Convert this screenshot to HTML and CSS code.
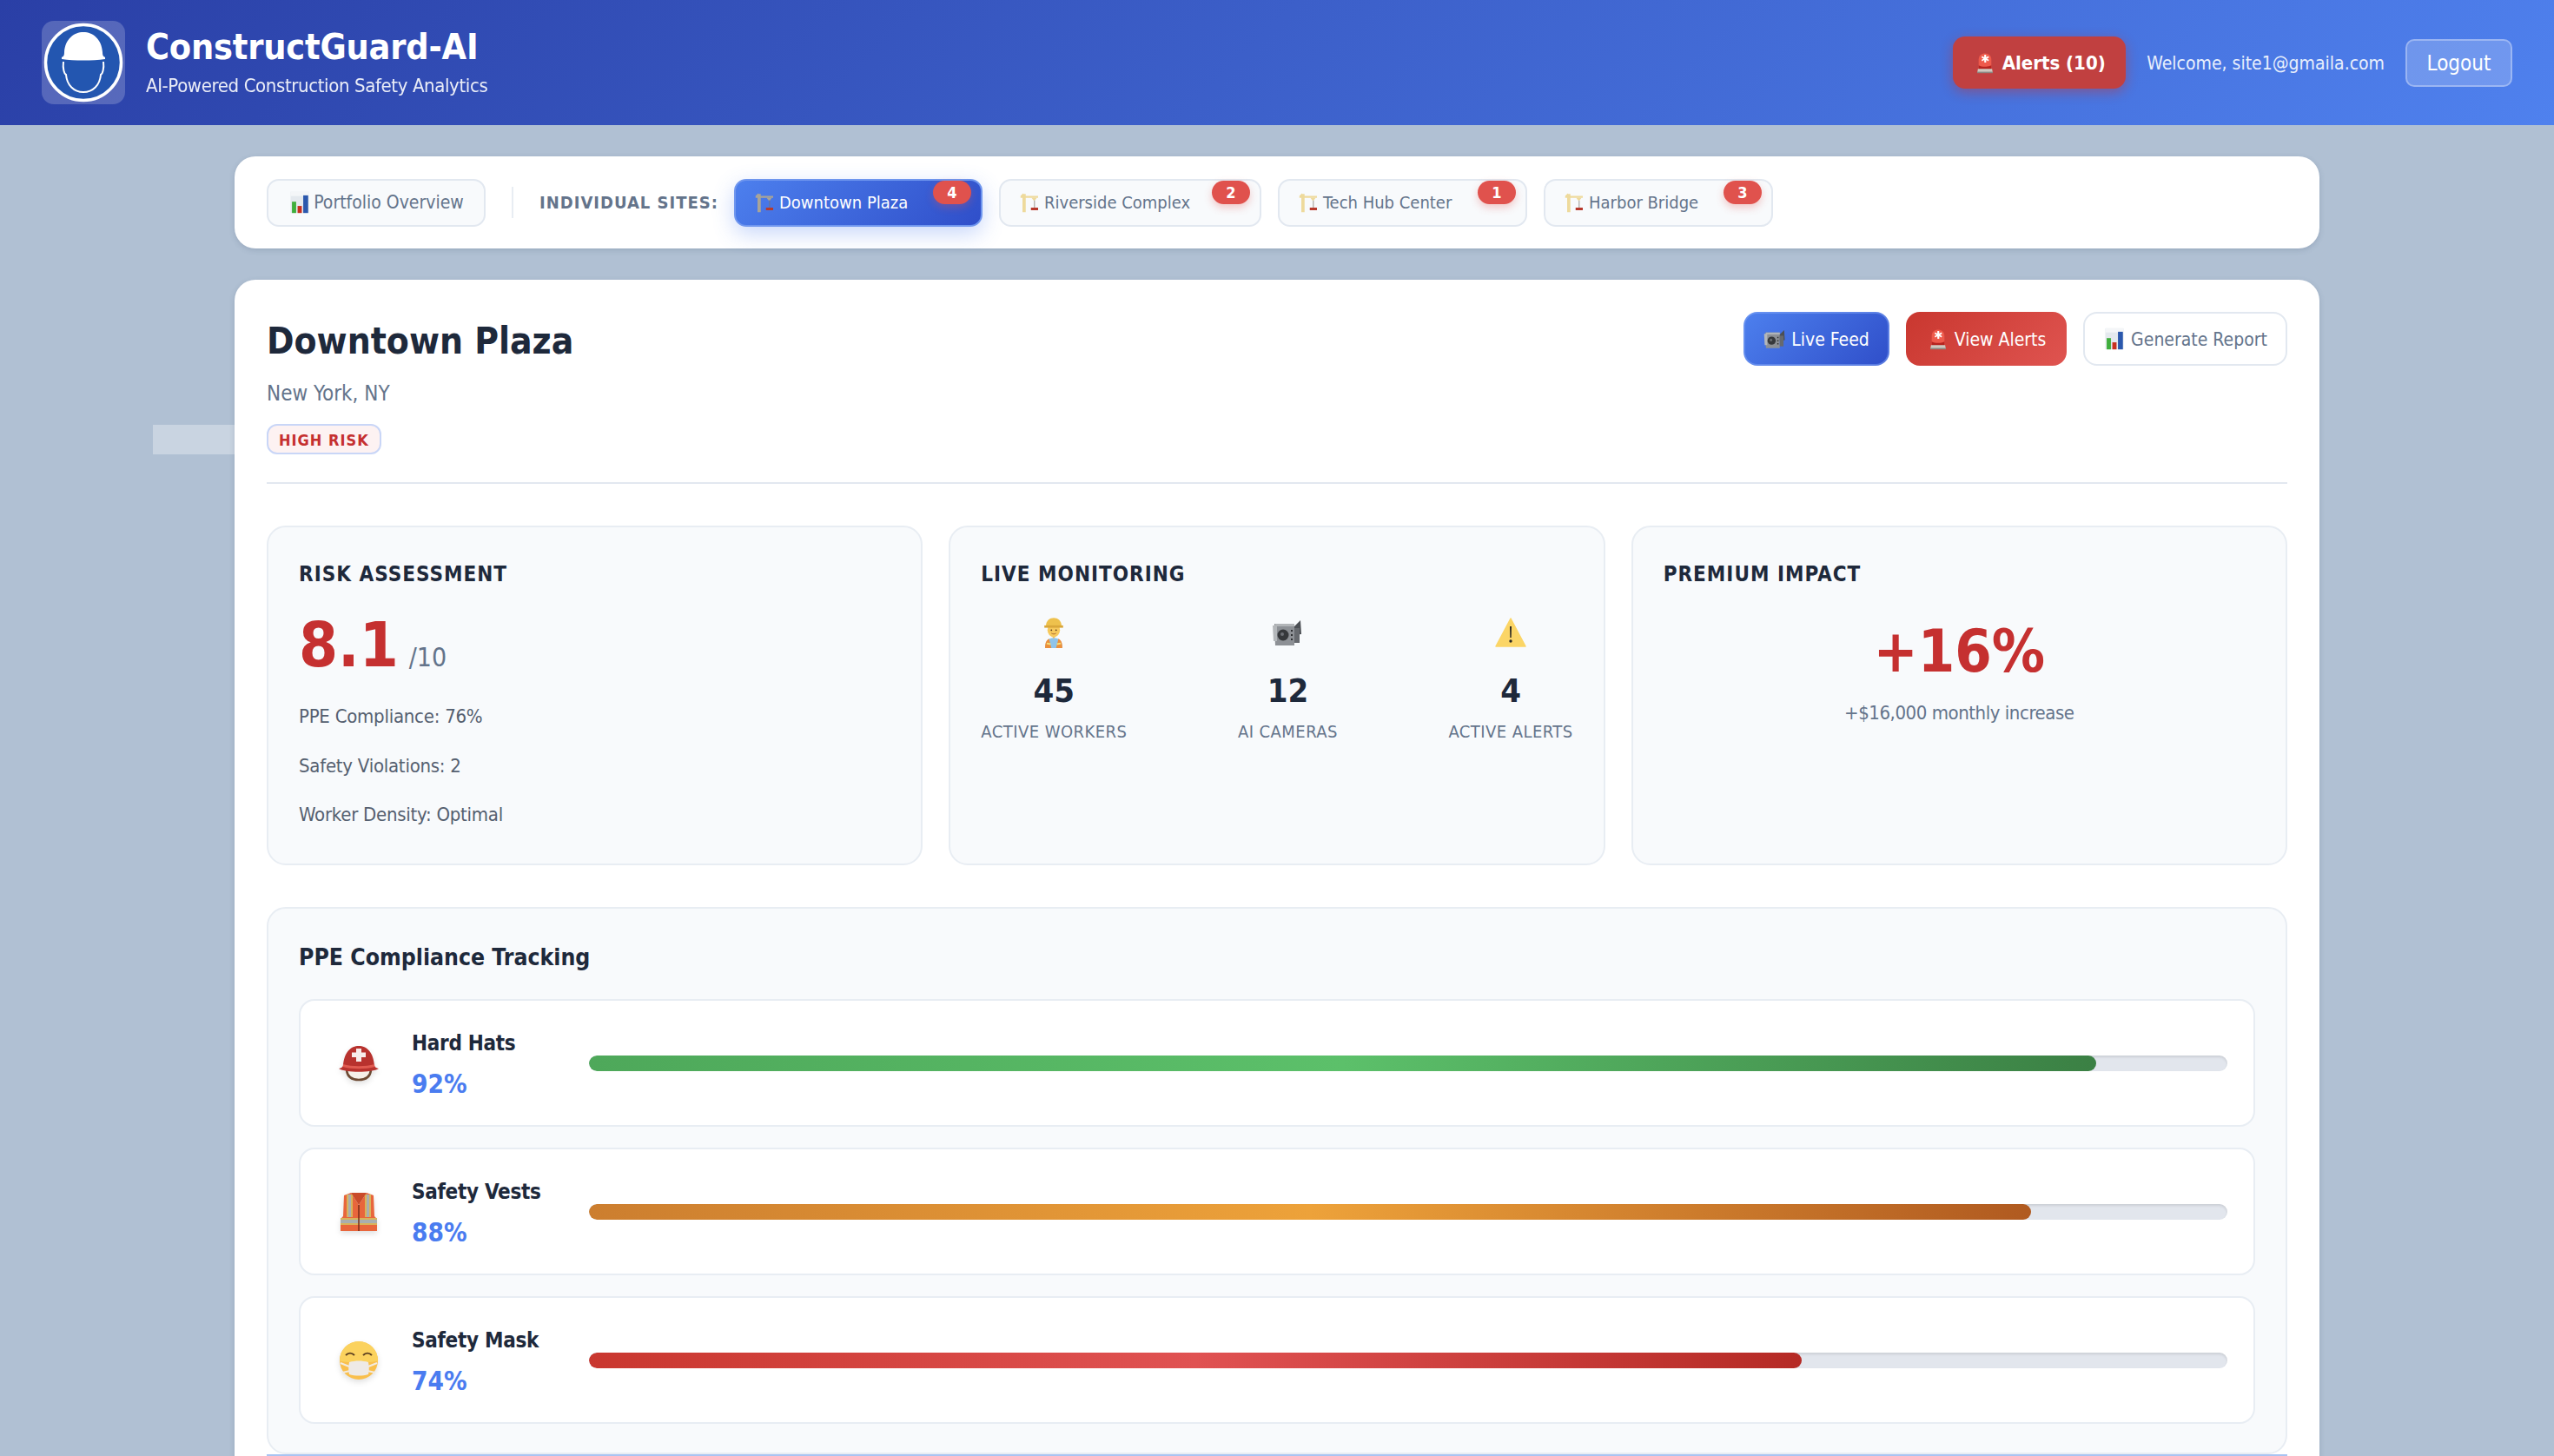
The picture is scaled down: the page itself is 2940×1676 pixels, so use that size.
FILE: index.html
```html
<!DOCTYPE html>
<html lang="en">

<head>
    <meta charset="UTF-8">
    <meta name="viewport" content="width=device-width, initial-scale=1.0">
    <title>ConstructGuard-AI</title>
    <link rel="stylesheet" href="styles.css">
</head>

<body>
    <!-- shared icons -->
    <svg class="defs" width="0" height="0">
        <symbol id="i-chart" viewBox="0 0 32 32">
            <path d="M3 1h26v30H3z" fill="#e4e9ee" />
            <path d="M3 1h26v6H3z" fill="#f4f6f8" />
            <path d="M5 15h6v16H5z" fill="#3fae3c" />
            <path d="M13 21h6v10h-6z" fill="#c8301f" />
            <path d="M21 6h7v25h-7z" fill="#2b58ad" />
        </symbol>
        <symbol id="i-crane" viewBox="0 0 32 32">
            <g fill="currentColor">
                <path d="M4 3h5v28H4z" />
                <path d="M1 6l4-4 1 4h22v3H1z" />
                <path d="M18 9h8l-3 4h-2z" />
            </g>
            <path d="M22 13h1v11h-1z" fill="#7c7468" />
            <path d="M17 24h11v4H17z" fill="#b8392c" />
        </symbol>
        <symbol id="i-siren" viewBox="0 0 32 32">
            <path d="M7 26V12C7 0 25 0 25 12v14z" fill="#ee5a4c" />
            <path d="M7 20c5 2.500 13 2.500 18 0v6H7z" fill="#b52420" />
            <path d="M15 5h2.500l.2 3.500 3-1.700 1 2-3 1.700 3 1.700-1.100 2-2.800-1.800-.2 3.600h-2.500l-.2-3.600-2.900 1.800-1-2 2.900-1.700-2.900-1.700 1-2 2.900 1.700z" fill="#fff" />
            <path d="M6 25h20l1 5H5z" fill="#cfc9c0" />
            <path d="M5 29h22v2H5z" fill="#8b8680" />
        </symbol>
        <symbol id="i-camera" viewBox="0 0 36 36">
            <path d="M24 13l9-9 1 16-10 1z" fill="#4c4f54" />
            <path d="M3 8h23v25H4z" fill="#8d9095" />
            <path d="M1 10h5v18H2z" fill="#b4b7ba" />
            <path d="M4 8h22v3H4z" fill="#b2b5b8" />
            <circle cx="13" cy="21" r="6.500" fill="#36383b" />
            <circle cx="12" cy="20" r="2" fill="#6d7075" />
            <path d="M22 15h2v2h-2zM22 20h2v2h-2zM22 25h2v2h-2z" fill="#2e3033" />
            <path d="M26 13h6v17h-6z" fill="#66696e" />
        </symbol>
        <symbol id="i-worker" viewBox="0 0 36 40">
            <path d="M7 40c0-9 4-13 11-13s11 4 11 13z" fill="#8fc4ea" />
            <path d="M7 40c0-6 1-10 5-12l3 12zM29 40c0-6-1-10-5-12l-3 12z" fill="#ec8f3c" />
            <path d="M9 34l5 1M27 34l-5 1" stroke="#f4e27a" stroke-width="2" />
            <path d="M18 28l-3-4h6z" fill="#e9b660" />
            <ellipse cx="18" cy="17" rx="8" ry="9" fill="#f7c95c" />
            <circle cx="15" cy="17" r="1" fill="#5a3b1a" />
            <circle cx="21" cy="17" r="1" fill="#5a3b1a" />
            <path d="M15 21c2 1.400 4 1.400 6 0" stroke="#a8642a" fill="none" />
            <path d="M8 12C8 -2 28 -2 28 12z" fill="#eec14d" />
            <path d="M6 11h24v3H6z" fill="#d9a73a" />
        </symbol>
        <symbol id="i-warning" viewBox="0 0 36 36">
            <path d="M18 2L35 34H1z" fill="#fbd566" stroke="#fbd566" stroke-linejoin="round" stroke-width="1.500" />
            <path d="M17 11h2l-.3 13h-1.400z" fill="#2a2722" />
            <circle cx="18" cy="28" r="1.700" fill="#2a2722" />
        </symbol>
        <symbol id="i-helmet" viewBox="0 0 48 44">
            <path d="M10 30c1 8 6 11 14 11s13-3 14-11" fill="#f6efe8" stroke="#6d4a33" stroke-width="2.500" />
            <path d="M1 28c4-1 4-2 5-3C7 9 15 2 24 2s17 7 18 23c1 1 1 2 5 3-8 5-38 5-46 0z" fill="#b8322e" />
            <path d="M6 23c10 3 26 3 36 0l.5 3c-10 3-27 3-37 0z" fill="#e05a50" />
            <path d="M21 5h6v4.500h5v5.500h-5v5h-6v-5h-5V9.500h5z" fill="#f7ecea" />
        </symbol>
        <symbol id="i-vest" viewBox="0 0 44 48">
            <path d="M5 5l8-3 9 14 9-14 8 3 1 24 3 3v14H1V32l3-3z" fill="#e8663c" />
            <path d="M8 4h7v26H8zM29 4h7v26h-7z" fill="#d9b35a" />
            <path d="M10 4h3v26h-3zM31 4h3v26h-3z" fill="#a9aeb0" />
            <path d="M1 31h42v8H1z" fill="#d9b35a" />
            <path d="M1 33h42v4H1z" fill="#a9aeb0" />
            <path d="M22 16v30" stroke="#7a2d18" stroke-width="1.500" />
            <path d="M13 2l9 14 9-14" fill="#c94a2a" />
        </symbol>
        <symbol id="i-mask" viewBox="0 0 48 48">
            <circle cx="24" cy="24" r="22" fill="#f9bf4c" />
            <path d="M2 24a22 22 0 0 1 44 0c0 3-44 3-44 0z" fill="#fbd25e" />
            <path d="M9 18c3-3 7-3 10 0M29 18c3-3 7-3 10 0" stroke="#5d4020" stroke-width="2" fill="none" />
            <path d="M3 27l10 4M45 27l-10 4M5 38l9-2M43 38l-9-2" stroke="#f2ebe0" stroke-width="2" />
            <path d="M13 26c7-2 15-2 22 0 1 5 1 10 0 14-7 2-15 2-22 0-1-4-1-9 0-14z" fill="#eeeae6" />
        </symbol>
    </svg>

    <div class="stray-strip"></div>

    <header class="topbar">
        <div class="brand">
            <div class="brand-logo">
                <svg viewBox="0 0 96 96" width="96" height="96">
                    <circle cx="48" cy="48" r="43.500" fill="#2356b0" stroke="#fff" stroke-width="3.500" />
                    <path d="M25 47c-1 8 1 14 3 15 1 12 9 20 20 20s19-8 20-20c2-1 4-7 3-15" fill="none" stroke="#fff" stroke-width="2" />
                    <path d="M23 42c2-1 3-2 3-6C27 21 37 13 48 13s21 8 22 23c0 4 1 5 3 6v2c-15 2-35 2-50 0z" fill="#fff" />
                </svg>
            </div>
            <div class="brand-text">
                <h1 class="brand-name">ConstructGuard-AI</h1>
                <p class="brand-sub">AI-Powered Construction Safety Analytics</p>
            </div>
        </div>
        <div class="user-box">
            <button class="alerts-btn"><svg class="ico"><use href="#i-siren" /></svg> Alerts (10)</button>
            <span class="welcome">Welcome, site1@gmaila.com</span>
            <button class="logout-btn">Logout</button>
        </div>
    </header>

    <main class="wrap">
        <nav class="site-nav">
            <a class="tab tab-portfolio"><svg class="ico"><use href="#i-chart" /></svg> Portfolio Overview</a>
            <span class="nav-sep"></span>
            <span class="nav-label">INDIVIDUAL SITES:</span>
            <a class="tab tab-site active"><svg class="ico crane-grey"><use href="#i-crane" /></svg> Downtown Plaza<span class="count">4</span></a>
            <a class="tab tab-site riverside"><svg class="ico crane-gold"><use href="#i-crane" /></svg> Riverside Complex<span class="count">2</span></a>
            <a class="tab tab-site tech"><svg class="ico crane-gold"><use href="#i-crane" /></svg> Tech Hub Center<span class="count">1</span></a>
            <a class="tab tab-site harbor"><svg class="ico crane-gold"><use href="#i-crane" /></svg> Harbor Bridge<span class="count">3</span></a>
        </nav>

        <section class="site-card">
            <div class="site-head">
                <div>
                    <h2 class="site-title">Downtown Plaza</h2>
                    <p class="site-loc">New York, NY</p>
                    <span class="risk-tag">HIGH RISK</span>
                </div>
                <div class="site-actions">
                    <button class="btn btn-blue"><svg class="ico"><use href="#i-camera" /></svg> Live Feed</button>
                    <button class="btn btn-red"><svg class="ico"><use href="#i-siren" /></svg> View Alerts</button>
                    <button class="btn btn-plain"><svg class="ico"><use href="#i-chart" /></svg> Generate Report</button>
                </div>
            </div>

            <div class="stat-grid">
                <div class="stat-card">
                    <h3>RISK ASSESSMENT</h3>
                    <div class="score"><b>8.1</b> <span>/10</span></div>
                    <p class="stat-line">PPE Compliance: 76%</p>
                    <p class="stat-line">Safety Violations: 2</p>
                    <p class="stat-line">Worker Density: Optimal</p>
                </div>
                <div class="stat-card">
                    <h3>LIVE MONITORING</h3>
                    <div class="live-row">
                        <div class="live-item">
                            <svg class="live-ico"><use href="#i-worker" /></svg>
                            <strong>45</strong>
                            <span>ACTIVE WORKERS</span>
                        </div>
                        <div class="live-item">
                            <svg class="live-ico"><use href="#i-camera" /></svg>
                            <strong>12</strong>
                            <span>AI CAMERAS</span>
                        </div>
                        <div class="live-item">
                            <svg class="live-ico"><use href="#i-warning" /></svg>
                            <strong>4</strong>
                            <span>ACTIVE ALERTS</span>
                        </div>
                    </div>
                </div>
                <div class="stat-card">
                    <h3>PREMIUM IMPACT</h3>
                    <div class="premium">
                        <b>+16%</b>
                        <span>+$16,000 monthly increase</span>
                    </div>
                </div>
            </div>

            <div class="ppe-panel">
                <h3>PPE Compliance Tracking</h3>
                <div class="ppe-row">
                    <svg class="ppe-ico"><use href="#i-helmet" /></svg>
                    <div class="ppe-info"><b>Hard Hats</b><span>92%</span></div>
                    <div class="bar"><div class="bar-fill green" style="width: 92%"></div></div>
                </div>
                <div class="ppe-row">
                    <svg class="ppe-ico"><use href="#i-vest" /></svg>
                    <div class="ppe-info"><b>Safety Vests</b><span>88%</span></div>
                    <div class="bar"><div class="bar-fill orange" style="width: 88%"></div></div>
                </div>
                <div class="ppe-row">
                    <svg class="ppe-ico"><use href="#i-mask" /></svg>
                    <div class="ppe-info"><b>Safety Mask</b><span>74%</span></div>
                    <div class="bar"><div class="bar-fill red" style="width: 74%"></div></div>
                </div>
            </div>
            <div class="next-panel"></div>
        </section>
    </main>
</body>

</html>
```

FILE: styles.css
```css
* {
    box-sizing: border-box;
}

html,
body {
    margin: 0;
    padding: 0;
    height: 100%;
    overflow: hidden;
}

body {
    background: #b0c0d3;
    font-family: "DejaVu Sans Condensed", "DejaVu Sans", sans-serif;
    font-stretch: condensed;
    color: #1e293b;
    position: relative;
}

h1,
h2,
h3,
p {
    margin: 0;
}

.defs {
    position: absolute;
}

.ico {
    width: 26px;
    height: 26px;
    vertical-align: -5px;
    flex: none;
}

.stray-strip {
    position: absolute;
    left: 176px;
    top: 489px;
    width: 200px;
    height: 34px;
    background: #c9d4e1;
}

/* top bar */
.topbar {
    height: 144px;
    padding: 0 48px;
    display: flex;
    align-items: center;
    justify-content: space-between;
    background: linear-gradient(135deg, #2a3fa6 0%, #4f81ee 100%);
    color: #fff;
    position: relative;
}

.brand {
    display: flex;
    align-items: center;
    gap: 24px;
}

.brand-logo {
    width: 96px;
    height: 96px;
    border-radius: 14px;
    background: rgba(255, 255, 255, 0.2);
}

.brand-text {
    padding-bottom: 3px;
}

.brand-name {
    font-size: 41px;
    letter-spacing: -0.2px;
    font-weight: 700;
    line-height: 48px;
}

.brand-sub {
    font-size: 22px;
    letter-spacing: -0.38px;
    margin-top: 8px;
    opacity: 0.9;
}

.user-box {
    display: flex;
    align-items: center;
    gap: 24px;
}

.alerts-btn {
    width: 199px;
    height: 60px;
    border: 0;
    border-radius: 14px;
    background: #c14040;
    box-shadow: 0 4px 14px rgba(197, 48, 48, 0.45);
    color: #fff;
    font: inherit;
    font-size: 22px;
    font-weight: 700;
    white-space: nowrap;
}

.welcome {
    font-size: 21px;
    margin-top: 2px;
    color: #e8effc;
}

.logout-btn {
    width: 123px;
    height: 55px;
    padding-top: 3px;
    border: 2px solid rgba(255, 255, 255, 0.3);
    border-radius: 10px;
    background: rgba(255, 255, 255, 0.2);
    color: #fff;
    font: inherit;
    font-size: 24px;
}

/* page */
.wrap {
    width: 2400px;
    margin: 0 auto;
    padding-top: 36px;
    position: relative;
}

.site-nav {
    height: 106px;
    padding: 0 37px;
    display: flex;
    align-items: center;
    background: #fff;
    border-radius: 24px;
    box-shadow: 0 2px 6px rgba(60, 80, 110, 0.2);
}

.tab {
    height: 55px;
    display: flex;
    align-items: center;
    gap: 3px;
    position: relative;
    border: 2px solid #e2e8f0;
    border-radius: 14px;
    background: #f8fafc;
    color: #64748b;
    font-size: 20px;
    white-space: nowrap;
}

.tab-portfolio {
    width: 252px;
    justify-content: center;
    font-size: 21px;
}

.nav-sep {
    width: 2px;
    height: 36px;
    margin: 0 30px;
    background: #e8edf3;
}

.nav-label {
    font-size: 20px;
    font-weight: 700;
    letter-spacing: 1px;
    color: #64748b;
    width: 224px;
}

.tab-site {
    padding-left: 22px;
    margin-right: 19px;
    gap: 4px;
}

.tab-site .ico {
    width: 24px;
    height: 24px;
}

.active {
    width: 286px;
    background: linear-gradient(135deg, #4d80ee, #2f4ec9) border-box;
    border-color: #6f96ee;
    color: #fff;
    box-shadow: 0 8px 24px rgba(74, 124, 240, 0.3);
}

.riverside {
    width: 302px;
}

.tech {
    width: 287px;
}

.harbor {
    width: 264px;
}

.crane-grey {
    color: #a8a498;
}

.crane-gold {
    color: #eeda9c;
}

.count {
    position: absolute;
    top: 0;
    right: 11px;
    width: 44px;
    height: 27px;
    border-radius: 14px;
    background: #e0524d;
    box-shadow: 0 4px 10px rgba(224, 82, 77, 0.3);
    color: #fff;
    font-size: 18px;
    font-weight: 700;
    text-align: center;
    line-height: 27px;
}

.site-card {
    margin-top: 36px;
    padding: 36px 37px 0;
    background: #fff;
    border-radius: 24px;
    box-shadow: 0 2px 6px rgba(60, 80, 110, 0.2);
}

.site-head {
    height: 199px;
    display: flex;
    justify-content: space-between;
    border-bottom: 2px solid #e2e8f0;
}

.site-title {
    font-size: 42.200px;
    font-weight: 700;
    line-height: 56px;
    margin-top: 7px;
}

.site-loc {
    margin-top: 18px;
    font-size: 24px;
    color: #64748b;
}

.risk-tag {
    display: inline-block;
    margin-top: 21px;
    padding: 0 12px;
    height: 35px;
    line-height: 33px;
    border: 2px solid #c9d6f7;
    border-radius: 12px;
    background: #fdf2f2;
    color: #c53030;
    font-size: 18px;
    font-weight: 700;
    letter-spacing: 1px;
}

.site-actions {
    display: flex;
    gap: 19px;
    height: 62px;
    margin-top: 1px;
}

.btn {
    padding: 0;
    border: 2px solid transparent;
    border-radius: 16px;
    font: inherit;
    font-size: 21px;
    color: #fff;
    white-space: nowrap;
}

.btn-blue {
    width: 168px;
    background: linear-gradient(135deg, #4d80ee, #2f4ec9) border-box;
    border-color: rgba(130, 165, 245, 0.5);
}

.btn-red {
    width: 185px;
    background: linear-gradient(135deg, #c9372f, #df5450) border-box;
}

.btn-plain {
    width: 235px;
    background: #fff;
    border-color: #e2e8f0;
    color: #64748b;
}

.stat-grid {
    display: grid;
    grid-template-columns: repeat(3, 1fr);
    gap: 30px;
    margin-top: 48px;
}

.stat-card {
    height: 391px;
    padding: 38px 35px;
    border: 2px solid #e8edf3;
    border-radius: 22px;
    background: #f8fafc;
}

.stat-card h3 {
    font-size: 24px;
    font-weight: 700;
    letter-spacing: 1px;
    line-height: 32px;
}

.score {
    margin-top: 20px;
    height: 90px;
    display: flex;
    align-items: center;
    gap: 12px;
}

.score b {
    font-size: 72px;
    color: #c53030;
}

.score span {
    font-size: 30px;
    color: #64748b;
    margin-top: 28px;
}

.stat-line {
    margin-top: 29.500px;
    font-size: 22px;
    letter-spacing: -0.25px;
    line-height: 27px;
    color: #556070;
}

.score + .stat-line {
    margin-top: 24px;
}

.live-row {
    display: flex;
    justify-content: space-between;
    margin-top: 33px;
}

.live-item {
    display: flex;
    flex-direction: column;
    align-items: center;
}

.live-ico {
    width: 36px;
    height: 36px;
}

.live-item strong {
    margin-top: 26px;
    font-size: 38px;
    line-height: 46px;
}

.live-item span {
    margin-top: 12px;
    font-size: 20px;
    letter-spacing: 0.45px;
    color: #64748b;
}

.premium {
    display: flex;
    flex-direction: column;
    align-items: center;
    margin-top: 30px;
}

.premium b {
    font-size: 68px;
    line-height: 86px;
    color: #c53030;
}

.premium span {
    margin-top: 15px;
    font-size: 22px;
    letter-spacing: -0.45px;
    color: #64748b;
}

.ppe-panel {
    margin-top: 48px;
    padding: 38px 35px 33px;
    border: 2px solid #e8edf3;
    border-radius: 22px;
    background: #f8fafc;
}

.ppe-panel h3 {
    font-size: 26.400px;
    font-weight: 700;
    line-height: 36px;
}

.ppe-row {
    height: 147px;
    margin-top: 24px;
    padding: 0 30px;
    display: flex;
    align-items: center;
    background: #fff;
    border: 2px solid #e8edf3;
    border-radius: 18px;
}

.ppe-panel h3 + .ppe-row {
    margin-top: 30px;
}

.ppe-ico {
    width: 48px;
    height: 48px;
    margin: 0 15px 0 13px;
    filter: drop-shadow(0 3px 3px rgba(0, 0, 0, 0.12));
}

.ppe-info {
    width: 204px;
    margin-left: 22px;
    padding-top: 2px;
    display: flex;
    flex-direction: column;
    gap: 16px;
}

.ppe-info b {
    font-size: 24px;
    letter-spacing: -0.3px;
    line-height: 30px;
}

.ppe-info span {
    font-size: 29.500px;
    line-height: 32px;
    font-weight: 700;
    color: #4a7cf0;
}

.bar {
    flex: 1;
    height: 18px;
    border-radius: 9px;
    background: #e2e6ed;
    box-shadow: inset 0 2px 3px rgba(0, 0, 0, 0.1);
    overflow: hidden;
}

.bar-fill {
    height: 100%;
    border-radius: 9px;
}

.green {
    background: linear-gradient(90deg, #4ea85a, #5cc06a 50%, #3b8044);
}

.orange {
    background: linear-gradient(90deg, #cc7e2f, #eda23a 50%, #b05a20);
}

.red {
    background: linear-gradient(90deg, #c9372f, #e05252 50%, #b52a25);
}

.next-panel {
    height: 60px;
    border-top: 2px solid #a9c4f2;
}
```
